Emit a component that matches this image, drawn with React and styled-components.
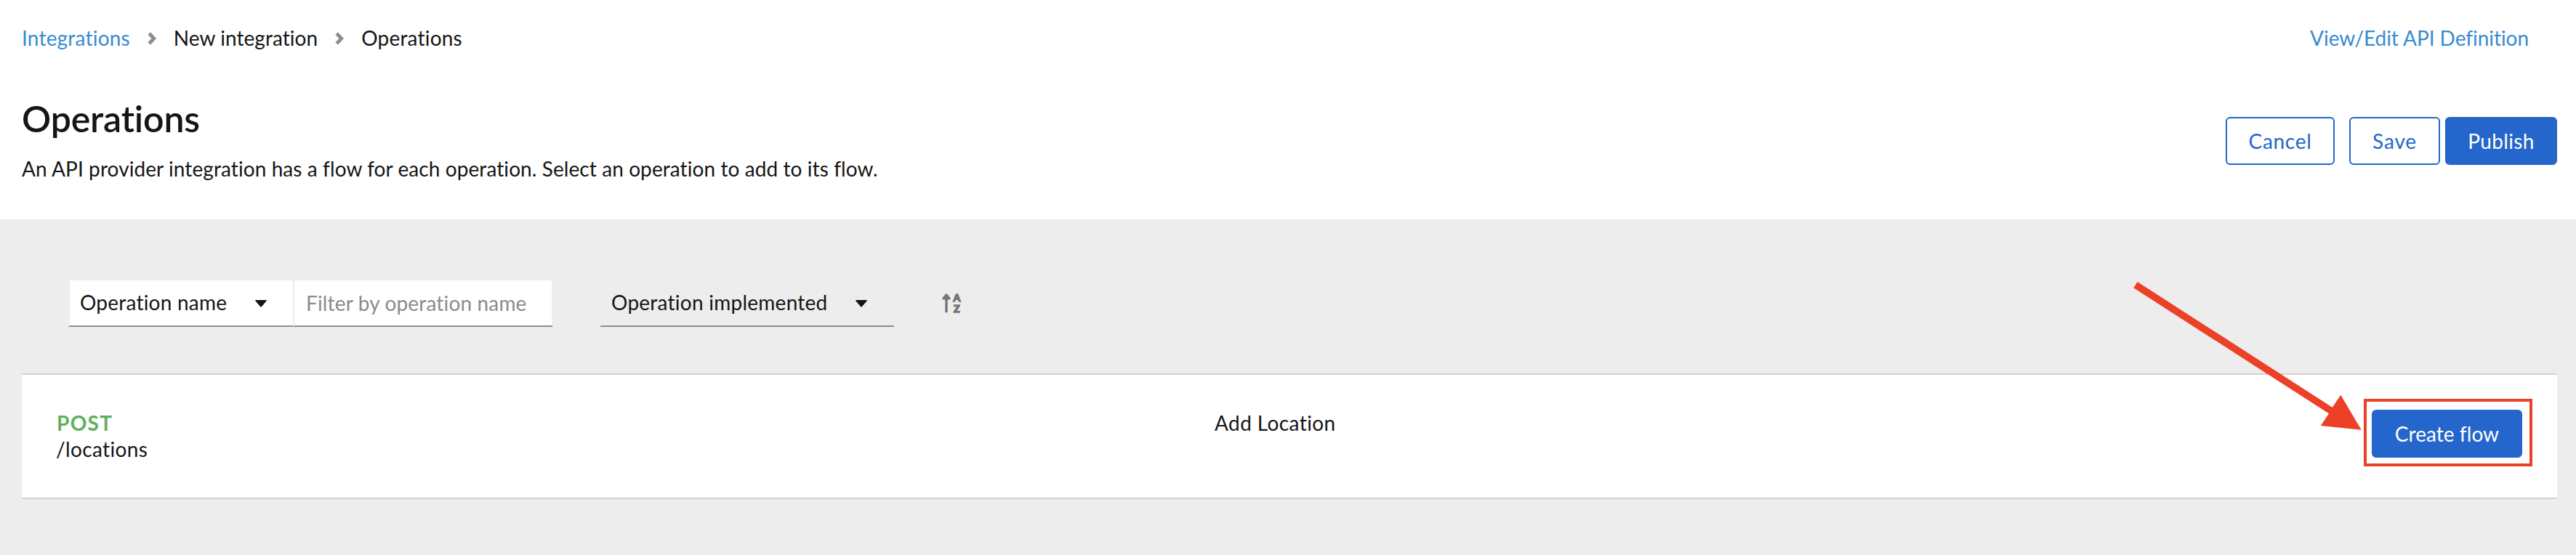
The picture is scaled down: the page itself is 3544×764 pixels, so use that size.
import React from "react";
import styled, { createGlobalStyle } from "styled-components";

const GlobalStyle = createGlobalStyle`
  * { box-sizing: border-box; }
  body {
    margin: 0;
    background: #ededed;
    color: #151515;
    font-family: Lato, "Liberation Sans", sans-serif;
    font-size: 28px;
    line-height: 36px;
  }
`;

const Text = styled.span`
  letter-spacing: ${(p) => p.$spacing || 0}px;
  white-space: nowrap;
`;

const Page = styled.div`
  display: flex;
  flex-direction: column;
  height: 764px;
`;

const Header = styled.header`
  height: 302px;
  padding: 34px 26px 0 30px;
  background: #fff;
`;

const TopBar = styled.div`
  display: flex;
  justify-content: space-between;
  padding-right: 39px;
`;

const Breadcrumb = styled.nav`
  display: flex;
`;

const Link = styled(Text)`
  color: #378bd1;
`;

const Chevron = styled.svg`
  width: 12px;
  height: 18px;
  margin: 10px 24px 0;
`;

const TitleRow = styled.div`
  display: flex;
  justify-content: space-between;
  margin-top: 63px;
`;

const Title = styled.h1`
  margin: 0 0 21px;
  font-size: 50px;
  font-weight: 600;
  line-height: 60px;
  letter-spacing: -0.15px;
`;

const Actions = styled.div`
  display: flex;
  padding-top: 28px;
`;

const Button = styled.button`
  display: block;
  width: ${(p) => p.$width}px;
  height: 66px;
  margin: 0 0 0 ${(p) => p.$gap || 0}px;
  padding: 0 0 1px;
  border: 2px solid #2566cc;
  border-radius: 6px;
  background: ${(p) => (p.$primary ? "#2566cc" : "#fff")};
  color: ${(p) => (p.$primary ? "#fff" : "#2566cc")};
  font: inherit;
  line-height: 36px;
`;

const Toolbar = styled.div`
  display: flex;
  height: 212px;
  padding: 82px 0 0 94px;
`;

const Select = styled.div`
  display: flex;
  justify-content: space-between;
  width: ${(p) => p.$width}px;
  height: 66px;
  margin-left: ${(p) => p.$gap || 0}px;
  padding: 12px 36px 0 14px;
  border: 2px solid #ededed;
  border-bottom-color: #8a8d90;
  background: ${(p) => (p.$plain ? "transparent" : "#fff")};
`;

const Caret = styled.svg`
  width: 16px;
  height: 10px;
  margin-top: 15px;
`;

const FilterInput = styled.input`
  width: 358px;
  height: 66px;
  margin-left: -2px;
  padding: 0 0 1px 16px;
  border: 2px solid #ededed;
  border-bottom-color: #8a8d90;
  border-radius: 0;
  background: #fff;
  font: inherit;
  letter-spacing: 0.16px;

  &::placeholder {
    color: #8b8b8b;
    opacity: 1;
  }
`;

const SortIcon = styled.svg`
  width: 28px;
  height: 32px;
  margin: 17px 0 0 64px;
  overflow: visible;
`;

const Card = styled.section`
  display: flex;
  height: 173px;
  margin: 0 26px 0 30px;
  padding: 48px 48px 0 47px;
  border: solid #d2d2d2;
  border-width: 2px 0;
  background: #fff;
`;

const Operation = styled.div`
  display: flex;
  flex-direction: column;
  width: 1594px;
`;

const Method = styled(Text)`
  padding-left: 1px;
  color: #5fb05b;
  font-weight: 700;
`;

const FlowAction = styled.div`
  position: relative;
  align-self: flex-start;
  margin-left: auto;
`;

const Highlight = styled.div`
  position: absolute;
  inset: -15px -14px -12px -11px;
  border: 4px solid #ec4126;
`;

const Arrow = styled.svg`
  position: absolute;
  left: -333px;
  top: -179px;
  width: 325px;
  height: 215px;
`;

const Separator = () => (
  <Chevron viewBox="0 0 12 18">
    <path d="M2.2 2 8.8 9l-6.6 7" fill="none" stroke="#8b8d8f" strokeWidth="4.8" />
  </Chevron>
);

const DownCaret = () => (
  <Caret viewBox="0 0 16 10">
    <path d="M.8 0h14.4q1.2.2.4 1.2L9 9q-1 1.2-2 0L.4 1.2Q-.4.2.8 0z" fill="#151515" />
  </Caret>
);

export default function App() {
  return (
    <Page>
      <GlobalStyle />
      <Header>
        <TopBar>
          <Breadcrumb>
            <Link $spacing={0.2}>Integrations</Link>
            <Separator />
            <Text $spacing={0.05}>New integration</Text>
            <Separator />
            <Text $spacing={0.2}>Operations</Text>
          </Breadcrumb>
          <Link $spacing={-0.05}>View/Edit API Definition</Link>
        </TopBar>
        <TitleRow>
          <div>
            <Title>Operations</Title>
            <Text $spacing={0.083}>
              An API provider integration has a flow for each operation. Select an operation to add to its flow.
            </Text>
          </div>
          <Actions>
            <Button $width={150}><Text $spacing={0.7}>Cancel</Text></Button>
            <Button $width={125} $gap={20}><Text $spacing={0.85}>Save</Text></Button>
            <Button $width={154} $gap={7} $primary><Text $spacing={0.35}>Publish</Text></Button>
          </Actions>
        </TitleRow>
      </Header>
      <Toolbar>
        <Select $width={311}>
          <Text $spacing={0.22}>Operation name</Text>
          <DownCaret />
        </Select>
        <FilterInput placeholder="Filter by operation name" />
        <Select $width={406} $gap={64} $plain>
          <Text $spacing={0.25}>Operation implemented</Text>
          <DownCaret />
        </Select>
        <SortIcon viewBox="0 0 28 32">
          <path
            d="M7 5v22.8M3 9.8h8L7 5z"
            fill="#72767b"
            stroke="#72767b"
            strokeWidth="3.4"
            strokeLinecap="round"
            strokeLinejoin="round"
          />
          <g fill="#72767b" stroke="#72767b" strokeWidth="1.4" fontSize="14" fontWeight="900" textAnchor="middle">
            <text x="21.3" y="14">A</text>
            <text x="21.3" y="28.6">Z</text>
          </g>
        </SortIcon>
      </Toolbar>
      <Card>
        <Operation>
          <Method $spacing={1.3}>POST</Method>
          <Text $spacing={0.36}>/locations</Text>
        </Operation>
        <Text $spacing={0.4}>Add Location</Text>
        <FlowAction>
          <Button $width={207} $primary><Text $spacing={0.05}>Create flow</Text></Button>
          <Highlight />
          <Arrow viewBox="0 0 325 215">
            <path d="M10.7 3 278.8 175.7 290.3 158.7 318.7 206.7 262.8 201 274 184.3 5.3 11.3z" fill="#ec4126" />
          </Arrow>
        </FlowAction>
      </Card>
    </Page>
  );
}
